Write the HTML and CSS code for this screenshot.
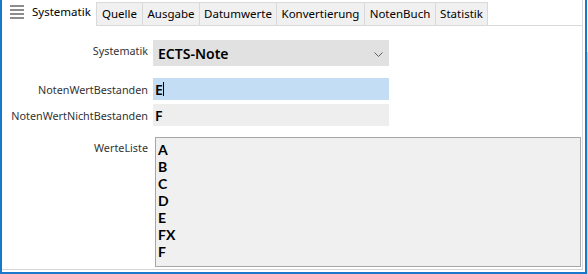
FILE: index.html
```html
<!DOCTYPE html>
<html>
<head>
<meta charset="utf-8">
<link rel="stylesheet" href="styles.css">
</head>
<body>
<div class="frame">
  <div class="tabstrip">
    <div class="tab tab-active">
      <svg class="menu-icon" width="14" height="14" viewBox="0 0 14 14">
        <rect x="0" y="0" width="14" height="2" fill="#8c8c8c"/>
        <rect x="0" y="4" width="14" height="2" fill="#8c8c8c"/>
        <rect x="0" y="8" width="14" height="2" fill="#8c8c8c"/>
        <rect x="0" y="12" width="14" height="2" fill="#8c8c8c"/>
      </svg>
      <span>Systematik</span>
    </div>
    <div class="tab w-quelle">Quelle</div>
    <div class="tab w-ausgabe">Ausgabe</div>
    <div class="tab w-datum">Datumwerte</div>
    <div class="tab w-konv">Konvertierung</div>
    <div class="tab w-noten">NotenBuch</div>
    <div class="tab tab-last w-stat">Statistik</div>
    <div class="tab-fill"></div>
  </div>
  <div class="panel">
    <div class="row row-combo">
      <div class="label label-top">Systematik</div>
      <div class="combo">
        <span class="combo-text">ECTS-Note</span>
        <svg class="chevron" width="9" height="5" viewBox="0 0 9 5">
          <polyline points="0.5,0.5 4.5,4.5 8.5,0.5" fill="none" stroke="#606060" stroke-width="1"/>
        </svg>
      </div>
    </div>
    <div class="row row-field1">
      <div class="label">NotenWertBestanden</div>
      <div class="field field-focus"><span class="field-text">E</span><span class="caret"></span></div>
    </div>
    <div class="row row-field2">
      <div class="label">NotenWertNichtBestanden</div>
      <div class="field field-plain"><span class="field-text">F</span></div>
    </div>
    <div class="row row-list">
      <div class="label label-list">WerteListe</div>
      <div class="list">
        <div class="item">A</div>
        <div class="item">B</div>
        <div class="item">C</div>
        <div class="item">D</div>
        <div class="item">E</div>
        <div class="item">FX</div>
        <div class="item">F</div>
      </div>
    </div>
  </div>
</div>
<div class="edge-strip"></div>
</body>
</html>
```
FILE: styles.css
```css
html, body {
  margin: 0;
  padding: 0;
  background: #ffffff;
}
body {
  width: 588px;
  height: 274px;
  display: flex;
  overflow: hidden;
  font-family: "Noto Sans", "Open Sans", sans-serif;
}
.frame {
  width: 587px;
  height: 274px;
  box-sizing: border-box;
  border-left: 2px solid #1a78cc;
  border-right: 2px solid #1a78cc;
  border-bottom: 2px solid #1a78cc;
  display: flex;
  flex-direction: column;
}
.edge-strip {
  width: 1px;
  margin-top: 52px;
  height: 222px;
  background: #cfcfcf;
}
.tabstrip {
  display: flex;
  align-items: flex-end;
  height: 26px;
  margin-right: 2px;
}
.tab {
  height: 24px;
  box-sizing: border-box;
  background: #f0f0f0;
  border-top: 1px solid #d9d9d9;
  border-left: 1px solid #d9d9d9;
  border-bottom: 1px solid #d9d9d9;
  font-size: 11.5px;
  color: #000;
  display: flex;
  align-items: center;
  justify-content: center;
  line-height: 1;
}
.tab-last {
  border-right: 1px solid #d9d9d9;
}
.tab-active {
  height: 26px;
  width: 94px;
  background: #ffffff;
  border: none;
  justify-content: flex-start;
  padding-left: 8px;
  padding-bottom: 3px;
  gap: 8px;
}
.menu-icon {
  flex: none;
}
.w-quelle { width: 46px; }
.w-ausgabe { width: 57px; }
.w-datum { width: 77px; }
.w-konv { width: 88px; }
.w-noten { width: 71px; }
.w-stat { width: 53px; }
.tab-fill {
  flex: 1;
  height: 26px;
  box-sizing: border-box;
  border-bottom: 1px solid #d9d9d9;
  border-right: 1px solid #d9d9d9;
}
.panel {
  flex: 1;
  margin-right: 2px;
  margin-bottom: 2px;
  border-right: 1px solid #d9d9d9;
  border-bottom: 1px solid #d4d4d4;
  padding-top: 14px;
  display: flex;
  flex-direction: column;
}
.row {
  display: flex;
  align-items: center;
}
.label {
  width: 146px;
  flex: none;
  text-align: right;
  font-size: 10.8px;
  line-height: 15px;
  color: #333333;
  padding-right: 5px;
  box-sizing: content-box;
}
.label-top {
  align-self: flex-start;
  padding-top: 3px;
}
.row-combo { margin-bottom: 12px; }
.row-field1 { margin-bottom: 4px; }
.row-field2 { margin-bottom: 11px; }
.combo {
  width: 236px;
  height: 26px;
  background: #e1e1e1;
  display: flex;
  align-items: center;
  justify-content: space-between;
  padding: 0 6px 0 5px;
  box-sizing: border-box;
}
.combo-text {
  font-size: 14px;
  font-weight: 600;
  color: #000;
}
.chevron {
  margin-top: 2px;
}
.field {
  width: 236px;
  height: 22px;
  display: flex;
  align-items: center;
  padding-left: 2px;
  box-sizing: border-box;
}
.field-focus { background: #c3ddf4; }
.field-plain { background: #eeeeee; }
.field-text {
  font-size: 14px;
  font-weight: 600;
  color: #000;
}
.caret {
  width: 1px;
  height: 14px;
  background: #000;
  margin-left: 0px;
}
.row-list {
  align-items: flex-start;
}
.label-list {
  padding-top: 3px;
}
.list {
  margin-left: 2px;
  width: 426px;
  height: 130px;
  box-sizing: border-box;
  border: 1px solid #a6a6a6;
  background: #f0f0f0;
  padding: 3px 0 0 2px;
}
.item {
  font-family: "Lato", "Noto Sans", sans-serif;
  font-size: 14px;
  font-weight: 700;
  line-height: 17px;
  color: #000;
}
```
